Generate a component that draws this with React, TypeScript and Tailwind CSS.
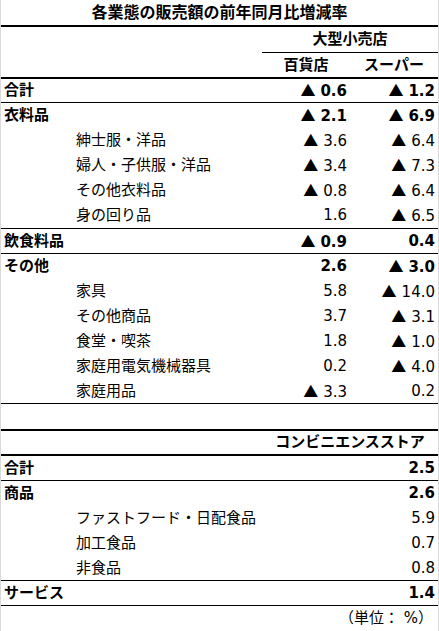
type Row = {
  label: string;
  a?: string;
  b?: string;
  sub?: boolean;
};

type Block = { last: number; rows: Row[] };

const upper: Block[] = [
  { last: 23, rows: [{ label: '合計', a: '▲ 0.6', b: '▲ 1.2' }] },
  {
    last: 25,
    rows: [
      { label: '衣料品', a: '▲ 2.1', b: '▲ 6.9' },
      { label: '紳士服・洋品', a: '▲ 3.6', b: '▲ 6.4', sub: true },
      { label: '婦人・子供服・洋品', a: '▲ 3.4', b: '▲ 7.3', sub: true },
      { label: 'その他衣料品', a: '▲ 0.8', b: '▲ 6.4', sub: true },
      { label: '身の回り品', a: '1.6', b: '▲ 6.5', sub: true },
    ],
  },
  { last: 24, rows: [{ label: '飲食料品', a: '▲ 0.9', b: '0.4' }] },
  {
    last: 24,
    rows: [
      { label: 'その他', a: '2.6', b: '▲ 3.0' },
      { label: '家具', a: '5.8', b: '▲ 14.0', sub: true },
      { label: 'その他商品', a: '3.7', b: '▲ 3.1', sub: true },
      { label: '食堂・喫茶', a: '1.8', b: '▲ 1.0', sub: true },
      { label: '家庭用電気機械器具', a: '0.2', b: '▲ 4.0', sub: true },
      { label: '家庭用品', a: '▲ 3.3', b: '0.2', sub: true },
    ],
  },
];

const lower: Block[] = [
  { last: 24, rows: [{ label: '合計', b: '2.5' }] },
  {
    last: 24,
    rows: [
      { label: '商品', b: '2.6' },
      { label: 'ファストフード・日配食品', b: '5.9', sub: true },
      { label: '加工食品', b: '0.7', sub: true },
      { label: '非食品', b: '0.8', sub: true },
    ],
  },
  { last: 24, rows: [{ label: 'サービス', b: '1.4' }] },
];

// ▲ marks a decrease; drawn with the CJK glyph, which is the wider one
function Value({ v }: { v?: string }) {
  if (!v) return null;
  if (v.startsWith('▲ ')) {
    return (
      <>
        <span className="font-['Noto_Sans_CJK_JP',sans-serif]">▲</span>
        <span className="ml-[5px]">{v.slice(2)}</span>
      </>
    );
  }
  return <>{v}</>;
}

function Group({ block, twoCols }: { block: Block; twoCols: boolean }) {
  return (
    <div className="border-b border-black">
      {block.rows.map((r, i) => (
        <div
          key={r.label}
          style={{ height: i === block.rows.length - 1 ? block.last : 25 }}
          className={`flex items-center text-[15px] ${
            r.sub ? 'font-normal' : 'font-bold'
          }`}
        >
          <div className={`w-[261px] ${r.sub ? 'pl-[75px]' : 'pl-[3px]'}`}>
            {r.label}
          </div>
          {twoCols ? (
            <>
              <div className="w-[88px] pr-[3px] text-right">
                <Value v={r.a} />
              </div>
              <div className="w-[88px] pr-[3px] text-right">
                <Value v={r.b} />
              </div>
            </>
          ) : (
            <div className="w-[176px] pr-[3px] text-right">
              <Value v={r.b} />
            </div>
          )}
        </div>
      ))}
    </div>
  );
}

export default function App() {
  return (
    <div className="w-[439px] h-[631px] bg-white text-black border-x border-[#d9d9d9] font-['DejaVu_Sans','Noto_Sans_CJK_JP',sans-serif] leading-none">
      <div className="flex h-[25px] items-center justify-center text-[16px] font-bold">
        各業態の販売額の前年同月比増減率
      </div>
      <div className="h-[2px] bg-black" />
      <div className="flex h-[26px]">
        <div className="w-[261px]" />
        <div className="flex w-[176px] items-center justify-center border-b border-black text-[15px] font-bold">
          大型小売店
        </div>
      </div>
      <div className="flex h-[26px] items-center border-b-2 border-black text-[15px] font-bold">
        <div className="w-[261px]" />
        <div className="w-[88px] text-center">百貨店</div>
        <div className="w-[88px] text-center">スーパー</div>
      </div>

      {upper.map((b, i) => (
        <Group key={i} block={b} twoCols />
      ))}

      <div className="h-[25px]" />

      <div className="flex h-[27px] items-center border-y-2 border-black text-[15px] font-bold">
        <div className="w-[261px]" />
        <div className="w-[176px] text-center">コンビニエンスストア</div>
      </div>

      {lower.map((b, i) => (
        <Group key={i} block={b} twoCols={false} />
      ))}

      <div className="flex h-[25px] items-center justify-end pr-[5px] text-[15px]">
        （単位： %）
      </div>
    </div>
  );
}
